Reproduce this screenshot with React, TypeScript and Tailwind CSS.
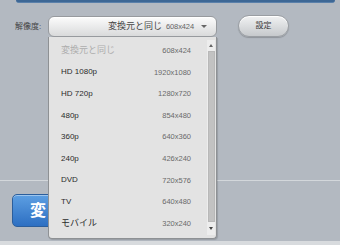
import React from 'react';

const options = [
  { name: '変換元と同じ', size: '608x424', disabled: true },
  { name: 'HD 1080p', size: '1920x1080' },
  { name: 'HD 720p', size: '1280x720' },
  { name: '480p', size: '854x480' },
  { name: '360p', size: '640x360' },
  { name: '240p', size: '426x240' },
  { name: 'DVD', size: '720x576' },
  { name: 'TV', size: '640x480' },
  { name: 'モバイル', size: '320x240' },
];

const font = 'font-["Liberation_Sans","Noto_Sans_CJK_JP",sans-serif]';

const App: React.FC = () => {
  return (
    <div className={`w-[340px] h-[245px] bg-[#b3b9c1] flex flex-col overflow-hidden ${font}`}>
      {/* top panel edge */}
      <div className="h-[3px] ml-[16px] mr-[5px] rounded-b-[6px] bg-[#3d6795] border-b border-[#5a80aa] shrink-0"></div>

      <div className="mt-[13px] h-[21px] flex items-center shrink-0">
        <span className="w-[48px] pl-[15px] text-[8px] text-[#444] leading-none">解像度:</span>

        <div className="relative w-[169px] h-[21px]">
          <div className="h-full rounded-[6px] border border-[#979a9e] bg-gradient-to-b from-[#fcfcfc] to-[#d9dadb] flex items-center justify-end pr-[9px] shadow-[inset_0_1px_0_#ffffff]">
            <span className="text-[9px] text-[#444] leading-none">変換元と同じ</span>
            <span className="ml-[4px] text-[7.5px] text-[#666] leading-none tracking-[-0.1px]">608x424</span>
            <span className="ml-[7px] w-0 h-0 border-l-[3px] border-r-[3px] border-t-[3px] border-l-transparent border-r-transparent border-t-[#666]"></span>
          </div>

          {/* dropdown list */}
          <div className="absolute left-0 top-[21px] w-[169px] h-[202px] bg-[#e3e3e3] border-x border-b border-[#8e9194] rounded-b-[4px] shadow-[1px_1px_1px_rgba(0,0,0,0.15)] z-10">
            <div className="pt-[3px] pl-[12px] pr-[25px]">
              {options.map((o) => (
                <div key={o.size} className="h-[21.6px] flex items-center justify-between">
                  <span className={`leading-none ${o.disabled ? 'text-[#adadad]' : 'text-[#2b2b2b]'} ${/[A-Za-z0-9]/.test(o.name) ? 'text-[8px]' : 'text-[9px]'}`}>
                    {o.name}
                  </span>
                  <span className="text-[7.5px] text-[#6a6a6a] leading-none">{o.size}</span>
                </div>
              ))}
            </div>

            {/* scrollbar */}
            <div className="absolute right-[1px] top-[3px] bottom-[3px] w-[8px] bg-[#ededed] flex flex-col items-center">
              <div className="h-[11px] flex items-center justify-center">
                <span className="w-0 h-0 border-l-[2.5px] border-r-[2.5px] border-b-[3px] border-l-transparent border-r-transparent border-b-[#666]"></span>
              </div>
              <div className="flex-1 w-[7px] bg-[#c2c2c2] border border-[#b8b8b8]"></div>
              <div className="h-[13px] flex items-center justify-center">
                <span className="w-0 h-0 border-l-[2.5px] border-r-[2.5px] border-t-[3px] border-l-transparent border-r-transparent border-t-[#444]"></span>
              </div>
            </div>
          </div>
        </div>

        <button className="ml-[21px] -mt-[2px] w-[51px] h-[22px] rounded-full border border-[#9a9ea3] bg-gradient-to-b from-[#f1f2f3] to-[#c6c9cc] shadow-[0_1px_1px_rgba(0,0,0,0.2),inset_0_1px_0_#ffffff] text-[8px] text-[#3a3a3a] leading-none">
          設定
        </button>
      </div>

      <div className="h-[143px] shrink-0"></div>
      <div className="h-px bg-[#d3d7db] shrink-0"></div>

      <div className="pt-[13px] pl-[12px] shrink-0">
        <button className="w-[120px] h-[33px] rounded-[5px] border border-[#2b5e9c] bg-gradient-to-b from-[#5d9fe2] to-[#2d6fc2] text-left pl-[17px] text-[16px] font-bold text-white leading-none tracking-[5px] shadow-[inset_0_1px_0_rgba(255,255,255,0.4)]">
          変換
        </button>
      </div>

      <div className="mt-auto h-[4px] bg-[#d8dbde] shrink-0"></div>
    </div>
  );
};

export default App;
